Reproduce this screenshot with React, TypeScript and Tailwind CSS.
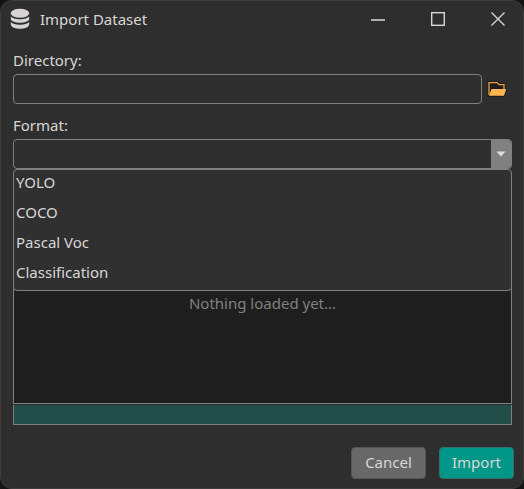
import { useState } from "react";

const FORMATS = ["YOLO", "COCO", "Pascal Voc", "Classification"];

function DatabaseIcon() {
  return (
    <svg width="20" height="22" viewBox="0 0 20 22" fill="#d8d4d4" aria-hidden="true">
      <ellipse cx="10" cy="5.3" rx="9.2" ry="4.5" />
      <path d="M0.8 8.2C3 12.2 17 12.2 19.2 8.2V11C18.2 16 1.8 16 0.8 11Z" />
      <path d="M0.8 13.7C3 17.7 17 17.7 19.2 13.7V16.5C18.2 22.3 1.8 22.3 0.8 16.5Z" />
    </svg>
  );
}

function FolderIcon() {
  return (
    <svg width="20" height="18" viewBox="0 0 20 18" aria-hidden="true">
      <path d="M0.5 1H11.5L13.5 3H18.5V7.5H20L18 17H0.5Z" fill="#1d1e20" />
      <path d="M2 15V2.7H10.2L12.2 4.7H17V9" fill="none" stroke="#e9a23b" strokeWidth="1.3" />
      <path d="M4.5 9H19.2L17 15.8H2Z" fill="#ffb550" />
    </svg>
  );
}

function TitleBar() {
  return (
    <header className="flex h-9 items-center pr-2 pl-[9px]">
      <DatabaseIcon />
      <h1 className="ml-[10px] flex-1 text-[15px] leading-5">Import Dataset</h1>
      <div className="flex gap-[26px]">
        <button type="button" aria-label="Minimize" className="flex h-[34px] w-[34px] items-center justify-center">
          <svg width="14" height="14" viewBox="0 0 14 14" aria-hidden="true">
            <path d="M0 8H14" stroke="#d0d0d0" strokeWidth="1.6" />
          </svg>
        </button>
        <button type="button" aria-label="Maximize" className="flex h-[34px] w-[34px] items-center justify-center">
          <svg width="14" height="14" viewBox="0 0 14 14" aria-hidden="true">
            <rect x="0.7" y="0.7" width="12.6" height="12.6" fill="none" stroke="#d8d8d8" strokeWidth="1.4" />
          </svg>
        </button>
        <button type="button" aria-label="Close" className="flex h-[34px] w-[34px] items-center justify-center">
          <svg width="14" height="14" viewBox="0 0 14 14" aria-hidden="true">
            <path d="M0.5 0.5L13.5 13.5M13.5 0.5L0.5 13.5" stroke="#d8d8d8" strokeWidth="1.3" />
          </svg>
        </button>
      </div>
    </header>
  );
}

export default function App() {
  const [directory, setDirectory] = useState("");
  const [format, setFormat] = useState("");

  return (
    <div className="min-h-screen bg-[#141414] font-['Noto_Sans',sans-serif] text-[15px] leading-5 text-[#dad6d6]">
      <main className="flex min-h-screen flex-col rounded-xl border border-[#3d3d3d] bg-[#2e2e2e]">
        <TitleBar />
        <form className="flex flex-1 flex-col pt-[13px] pr-[11px] pl-3" onSubmit={(e) => e.preventDefault()}>
          <label htmlFor="directory">Directory:</label>
          <div className="mt-1 flex items-center">
            <input
              id="directory"
              type="text"
              value={directory}
              onChange={(e) => setDirectory(e.target.value)}
              className="h-[30px] min-w-0 flex-1 rounded-[4px] border border-[#808080] bg-transparent px-1 outline-none"
            />
            <button type="button" aria-label="Browse" className="flex w-[30px] justify-center">
              <FolderIcon />
            </button>
          </div>

          <label htmlFor="format" className="mt-[11px]">
            Format:
          </label>
          <div className="relative mt-1">
            <div className="flex h-[30px] overflow-hidden rounded-[4px] border border-[#808080]">
              <select
                id="format"
                value={format}
                onChange={(e) => setFormat(e.target.value)}
                className="min-w-0 flex-1 appearance-none bg-transparent px-1 outline-none"
              >
                <option value="" />
                {FORMATS.map((name) => (
                  <option key={name}>{name}</option>
                ))}
              </select>
              <span className="flex w-5 items-center justify-center bg-[#808080]">
                <svg width="10" height="6" viewBox="0 0 10 6" aria-hidden="true">
                  <path d="M0.5 0.5H9.5L5 5.5Z" fill="#dedede" />
                </svg>
              </span>
            </div>
            <ul
              role="listbox"
              aria-label="Format"
              className="absolute inset-x-0 top-full rounded-[4px] border border-[#808080] bg-[#303030]"
            >
              {FORMATS.map((name) => (
                <li
                  key={name}
                  role="option"
                  aria-selected={format === name}
                  onClick={() => setFormat(name)}
                  className="px-[2px] pt-[2px] pb-2"
                >
                  {name}
                </li>
              ))}
            </ul>
          </div>

          <section className="mt-[34px] flex min-h-[200px] flex-1 flex-col border border-[#808080] bg-[#1e1e1e]">
            <p className="pt-[89px] text-center text-[#808080]">Nothing loaded yet...</p>
          </section>
          <div
            role="progressbar"
            aria-label="Import progress"
            aria-valuenow={0}
            className="mt-px h-5 border border-t-0 border-[#808080] bg-[#224d49]"
          />

          <div className="-mr-[2px] mt-[22px] mb-[9px] flex justify-end gap-[13px]">
            <button type="button" className="h-8 w-[75px] rounded-[4px] border border-[#555555] bg-[#686868] pb-[2px]">
              Cancel
            </button>
            <button type="submit" className="h-8 w-[75px] rounded-[4px] border border-[#37706a] bg-[#009688] pb-[2px]">
              Import
            </button>
          </div>
        </form>
      </main>
    </div>
  );
}
